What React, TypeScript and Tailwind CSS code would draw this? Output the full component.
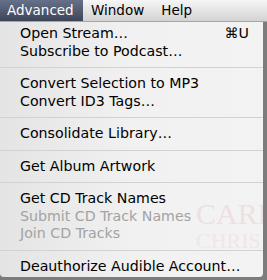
import React from "react";

type Item = { label: string; shortcut?: string; disabled?: boolean } | "sep";

const items: Item[] = [
  { label: "Open Stream…", shortcut: "⌘U" },
  { label: "Subscribe to Podcast…" },
  "sep",
  { label: "Convert Selection to MP3" },
  { label: "Convert ID3 Tags…" },
  "sep",
  { label: "Consolidate Library…" },
  "sep",
  { label: "Get Album Artwork" },
  "sep",
  { label: "Get CD Track Names" },
  { label: "Submit CD Track Names", disabled: true },
  { label: "Join CD Tracks", disabled: true },
  "sep",
  { label: "Deauthorize Audible Account…" },
];

const App = () => {
  return (
    <div
      className="w-[267px] h-[280px] overflow-hidden relative bg-[#7c7c7c]"
      style={{ fontFamily: '"DejaVu Sans", "Liberation Sans", sans-serif' }}
    >
      {/* menu bar */}
      <div className="h-[22px] flex items-stretch text-[13.5px] bg-gradient-to-b from-[#f6f6f6] to-[#d3d3d3] border-b border-[#a5a5a5]">
        <div className="w-[83px] flex items-center pl-[7px] text-white bg-gradient-to-b from-[#66718a] to-[#3d4558]">
          Advanced
        </div>
        <div className="flex items-center pl-[8px] text-black">Window</div>
        <div className="flex items-center pl-[17px] text-black">Help</div>
      </div>

      {/* dropdown */}
      <div className="relative w-[263px] h-[255px] pt-[3px] overflow-hidden text-[14.2px] bg-gradient-to-r from-[#e4e4e4] via-[#f1f1f1] to-[#f3f3f3] rounded-b-[4px]">
        <div
          className="absolute left-[196px] top-[180px] text-[30px] leading-[24px] text-[#eedfe0] whitespace-nowrap pointer-events-none"
          style={{ fontFamily: '"Liberation Serif", serif' }}
        >
          CARL
          <br />
          <span className="text-[22px] text-[#f0e6e7]">CHRIS</span>
        </div>
        <div className="relative flex flex-col">
          {items.map((it, i) =>
            it === "sep" ? (
              <div key={i} className="h-[15px] flex items-center">
                <div className="h-px w-full bg-[#d2d2d2]" />
              </div>
            ) : (
              <div
                key={i}
                className={`h-[17.5px] flex items-center justify-between pl-[20px] pr-[14px] whitespace-nowrap ${
                  it.disabled ? "text-[#a3a3a3]" : "text-black"
                }`}
              >
                <span>{it.label}</span>
                {it.shortcut && <span>{it.shortcut}</span>}
              </div>
            )
          )}
        </div>
      </div>
    </div>
  );
};

export default App;
